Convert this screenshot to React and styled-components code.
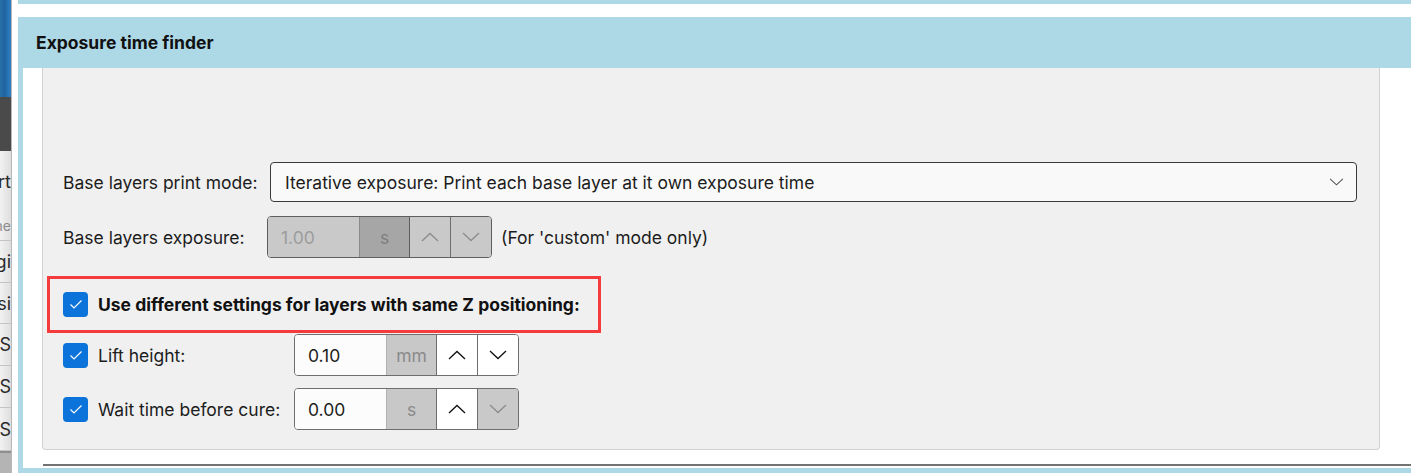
import styled, { createGlobalStyle } from 'styled-components';

const GlobalStyle = createGlobalStyle`
  html, body {
    margin: 0;
    padding: 0;
    background: #ffffff;
    font-family: Inter, "Noto Sans", sans-serif;
    color: #1c1c1c;
  }
`;

const Page = styled.div`
  display: flex;
  width: 1411px;
  height: 473px;
  overflow: hidden;
  background: #ffffff;
`;

const Sidebar = styled.div`
  display: flex;
  flex-direction: column;
  width: 11px;
  flex-shrink: 0;
  border-right: 1px solid #b8b8b8;
  overflow: hidden;
`;

const SideImage = styled.div`
  height: 97px;
  background: linear-gradient(90deg, #2a6fa6 0%, #1f63a0 40%, #2f82c6 100%);
`;

const SideDark = styled.div`
  height: 54px;
  background: #4a4a4a;
`;

const SideItem = styled.div`
  display: flex;
  justify-content: flex-end;
  align-items: center;
  height: ${(p) => p.h}px;
  white-space: nowrap;
  overflow: hidden;
  font-size: ${(p) => (p.small ? 14 : 18)}px;
  color: ${(p) => (p.small ? '#8a8a8a' : '#2a2a2a')};
  background: linear-gradient(90deg, #f2f2f2, #dedede);
  border-bottom: ${(p) => (p.line ? '1px solid #c4c4c4' : 'none')};
`;

const SideFoot = styled.div`
  flex: 1;
  background: #b4b4b4;
  border-top: 2px solid #8e8e8e;
`;

const Main = styled.div`
  flex: 1;
  display: flex;
  flex-direction: column;
  padding-left: 6px;
`;

const TopStrip = styled.div`
  height: 4px;
  background: #add8e6;
`;

const Card = styled.div`
  margin-top: 13px;
  display: flex;
  flex-direction: column;
  flex: 1;
`;

const Header = styled.div`
  height: 51px;
  display: flex;
  align-items: center;
  padding-left: 18px;
  background: #add8e6;
  font-size: 17.5px;
  font-weight: 700;
  color: #111;
`;

const Body = styled.div`
  flex: 1;
  border-left: 5px solid #add8e6;
  border-bottom: 5px solid #add8e6;
  padding-left: 19px;
  display: flex;
  flex-direction: column;
`;

const Panel = styled.div`
  height: 382px;
  margin-right: 31px;
  background: #f0f0f0;
  border: 1px solid #d2d2d2;
  border-top: none;
  border-radius: 0 0 4px 4px;
  padding: 94px 0 0 20px;
  box-sizing: border-box;
  display: flex;
  flex-direction: column;
`;

const Rule = styled.div`
  margin-top: 14px;
  margin-left: 1px;
  height: 2px;
  background: #737373;
`;

const Row = styled.div`
  display: flex;
  align-items: center;
  margin-top: ${(p) => p.mt || 0}px;
`;

const Label = styled.div`
  width: ${(p) => p.w}px;
  flex-shrink: 0;
  font-size: 17.5px;
  color: #1c1c1c;
  white-space: nowrap;
`;

const Select = styled.div`
  width: 1087px;
  height: 40px;
  box-sizing: border-box;
  display: flex;
  align-items: center;
  justify-content: space-between;
  padding: 0 12px 0 14px;
  background: #f9f9f9;
  border: 1px solid #3a3a3a;
  border-radius: 4px;
  font-size: 17.5px;
  color: #1c1c1c;
`;

const Spin = styled.div`
  display: flex;
  width: 225px;
  height: 42px;
  box-sizing: border-box;
  border: 1px solid ${(p) => (p.disabled ? '#5e5e5e' : '#6e6e6e')};
  border-radius: 4px;
  overflow: hidden;
`;

const SpinValue = styled.div`
  width: 91px;
  display: flex;
  align-items: center;
  padding-left: 13px;
  box-sizing: border-box;
  font-size: 17.5px;
  background: ${(p) => (p.disabled ? '#c9c9c9' : '#fcfcfc')};
  color: ${(p) => (p.disabled ? '#9c9c9c' : '#1c1c1c')};
`;

const SpinUnit = styled.div`
  width: 49px;
  display: flex;
  align-items: center;
  justify-content: center;
  font-size: 17.5px;
  background: ${(p) => (p.disabled ? '#a6a6a6' : '#c8c8c8')};
  color: ${(p) => (p.disabled ? '#7e7e7e' : '#8a8a8a')};
  border-left: 1px solid ${(p) => (p.disabled ? '#8a8a8a' : '#b0b0b0')};
  border-right: 1px solid ${(p) => (p.disabled ? '#5e5e5e' : '#6e6e6e')};
`;

const SpinBtn = styled.div`
  flex: 1;
  display: flex;
  align-items: center;
  justify-content: center;
  background: ${(p) => (p.disabled ? '#c9c9c9' : '#ffffff')};
  color: ${(p) => (p.disabled ? '#8c8c8c' : '#111111')};
  & + & {
    border-left: 1px solid ${(p) => (p.disabled ? '#6a6a6a' : '#6e6e6e')};
  }
`;

const Note = styled.span`
  margin-left: 9px;
  font-size: 17.5px;
  color: #1c1c1c;
`;

const Highlight = styled.div`
  width: 554px;
  height: 57px;
  box-sizing: border-box;
  margin: 18px 0 0 -16px;
  padding-left: 13px;
  border: 3px solid #f53b3b;
  display: flex;
  align-items: center;
`;

const Check = styled.div`
  width: 25px;
  height: 25px;
  flex-shrink: 0;
  border-radius: 4px;
  background: #0b73d9;
  display: flex;
  align-items: center;
  justify-content: center;
  margin-right: 10px;
`;

const BoldText = styled.span`
  font-size: 17.5px;
  font-weight: 700;
  color: #111;
`;

const Chevron = ({ up, w = 18, h = 10 }) => (
  <svg width={w} height={h} viewBox="0 0 18 10" fill="none">
    <polyline
      points={up ? '1,9 9,1.5 17,9' : '1,1 9,8.5 17,1'}
      stroke="currentColor"
      strokeWidth="1.3"
    />
  </svg>
);

const CheckBox = () => (
  <Check>
    <svg width="14" height="11" viewBox="0 0 14 11" fill="none">
      <polyline points="1.5,5.5 5,9 12.5,1.5" stroke="#ffffff" strokeWidth="1.2" />
    </svg>
  </Check>
);

const SpinBox = ({ value, unit, disabled, downDisabled }) => (
  <Spin disabled={disabled}>
    <SpinValue disabled={disabled}>{value}</SpinValue>
    <SpinUnit disabled={disabled}>{unit}</SpinUnit>
    <SpinBtn disabled={disabled}>
      <Chevron up />
    </SpinBtn>
    <SpinBtn disabled={disabled || downDisabled}>
      <Chevron />
    </SpinBtn>
  </Spin>
);

const sideItems = [
  { text: 'Start', h: 60 },
  { text: 'Tone', h: 29, small: true, line: true },
  { text: 'Logi', h: 41, line: true },
  { text: 'Possi', h: 40, line: true },
  { text: 'S', h: 41, line: true },
  { text: 'S', h: 41, line: true },
  { text: 'S', h: 42, line: true },
];

export default function App() {
  return (
    <>
      <GlobalStyle />
      <Page>
        <Sidebar>
          <SideImage />
          <SideDark />
          {sideItems.map((it, i) => (
            <SideItem key={i} h={it.h} small={it.small} line={it.line}>
              {it.text}
            </SideItem>
          ))}
          <SideFoot />
        </Sidebar>
        <Main>
          <TopStrip />
          <Card>
            <Header>Exposure time finder</Header>
            <Body>
              <Panel>
                <Row>
                  <Label w={207}>Base layers print mode:</Label>
                  <Select>
                    <span>Iterative exposure: Print each base layer at it own exposure time</span>
                    <span style={{ color: '#555', display: 'flex' }}>
                      <Chevron w={15} h={8} />
                    </span>
                  </Select>
                </Row>
                <Row mt={14}>
                  <Label w={204}>Base layers exposure:</Label>
                  <SpinBox value="1.00" unit="s" disabled />
                  <Note>(For 'custom' mode only)</Note>
                </Row>
                <Highlight>
                  <CheckBox />
                  <BoldText>Use different settings for layers with same Z positioning:</BoldText>
                </Highlight>
                <Row mt={1}>
                  <CheckBox />
                  <Label w={196}>Lift height:</Label>
                  <SpinBox value="0.10" unit="mm" />
                </Row>
                <Row mt={12}>
                  <CheckBox />
                  <Label w={196}>Wait time before cure:</Label>
                  <SpinBox value="0.00" unit="s" downDisabled />
                </Row>
              </Panel>
              <Rule />
            </Body>
          </Card>
        </Main>
      </Page>
    </>
  );
}
